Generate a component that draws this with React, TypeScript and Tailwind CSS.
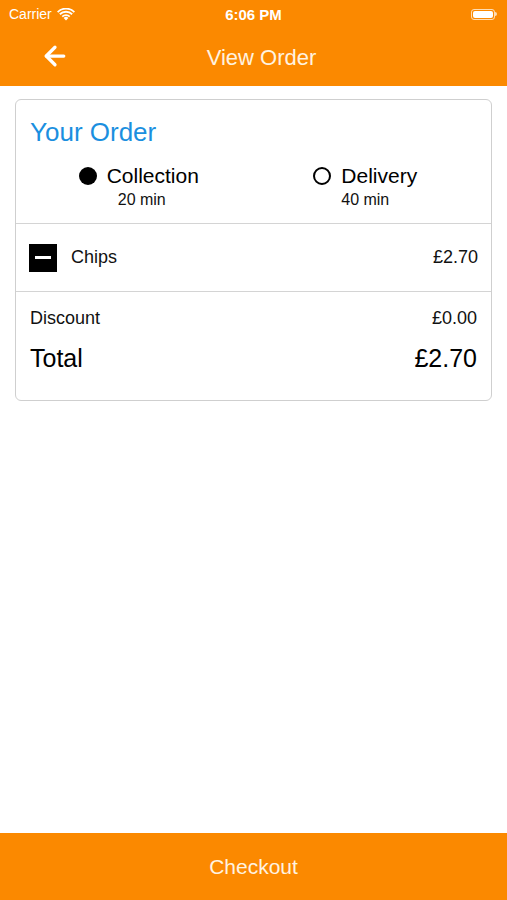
import { ArrowLeft } from "lucide-react";

const font = { fontFamily: "'Liberation Sans', Arial, sans-serif" };

function StatusBar() {
  return (
    <div className="h-[28px] flex items-center justify-between px-[9px] text-white">
      <div className="flex items-center gap-[5px] w-[120px]">
        <span className="text-[14px] leading-none">Carrier</span>
        <svg width="18" height="13" viewBox="0 0 18 13" fill="white">
          <path d="M9 12.5 L6.6 10 A3.4 3.4 0 0 1 11.4 10 Z" />
          <path d="M4.6 8 A6.2 6.2 0 0 1 13.4 8 L12.1 9.3 A4.4 4.4 0 0 0 5.9 9.3 Z" />
          <path d="M2.2 5.6 A9.6 9.6 0 0 1 15.8 5.6 L14.5 6.9 A7.8 7.8 0 0 0 3.5 6.9 Z" />
          <path d="M0 3.4 A12.8 12.8 0 0 1 18 3.4 L16.7 4.7 A11 11 0 0 0 1.3 4.7 Z" />
        </svg>
      </div>
      <span className="text-[15px] font-semibold leading-none">6:06 PM</span>
      <div className="w-[120px] flex justify-end pr-[1px]">
        <div className="flex items-center">
          <div className="w-[24px] h-[11px] rounded-[3px] border border-white/70 p-[1px]">
            <div className="w-full h-full rounded-[2px] bg-white" />
          </div>
          <div className="w-[1.5px] h-[4px] bg-white/70 rounded-r" />
        </div>
      </div>
    </div>
  );
}

export default function App() {
  return (
    <div className="w-[507px] h-[900px] flex flex-col bg-white" style={font}>
      <div className="bg-[#fb8900] h-[86px] flex flex-col">
        <StatusBar />
        <div className="relative flex-1 flex items-center justify-center">
          <ArrowLeft className="absolute left-[40px] top-[13px] text-white" size={30} strokeWidth={2.6} />
          <span className="text-[22px] text-[#fff3e0] pl-[16px]">View Order</span>
        </div>
      </div>

      <div className="flex-1 px-[15px] pt-[13px]">
        <div className="border border-[#cfcfcf] rounded-[6px]">
          <div className="pt-[15px] pb-[12px]">
            <h1 className="px-[14px] text-[26px] leading-[34px] text-[#1b8fdf]">Your Order</h1>
            <div className="grid grid-cols-2 px-[14px] mt-[14px]">
              <div className="flex flex-col items-center">
                <div className="flex items-center gap-[10px] pr-[6px]">
                  <span className="w-[18px] h-[18px] rounded-full bg-black" />
                  <span className="text-[21px] leading-[26px] text-black">Collection</span>
                </div>
                <span className="text-[16px] leading-[22px] text-[#111]">20 min</span>
              </div>
              <div className="flex flex-col items-center">
                <div className="flex items-center gap-[10px]">
                  <span className="w-[18px] h-[18px] rounded-full border-2 border-black" />
                  <span className="text-[21px] leading-[26px] text-black">Delivery</span>
                </div>
                <span className="text-[16px] leading-[22px] text-[#111]">40 min</span>
              </div>
            </div>
          </div>

          <div className="border-t border-[#d4d4d4] h-[68px] flex items-center justify-between px-[13px]">
            <div className="flex items-center gap-[14px]">
              <div className="w-[28px] h-[28px] bg-black flex items-center justify-center">
                <div className="w-[16px] h-[3px] bg-white" />
              </div>
              <span className="text-[18px] text-[#111]">Chips</span>
            </div>
            <span className="text-[18px] text-[#111]">£2.70</span>
          </div>

          <div className="border-t border-[#d4d4d4] px-[14px] pt-[14px] pb-[27px]">
            <div className="flex justify-between text-[18px] leading-[24px] text-[#111]">
              <span>Discount</span>
              <span>£0.00</span>
            </div>
            <div className="flex justify-between text-[25px] leading-[30px] text-black mt-[13px]">
              <span>Total</span>
              <span>£2.70</span>
            </div>
          </div>
        </div>
      </div>

      <div className="h-[67px] bg-[#fb8900] flex items-center justify-center">
        <span className="text-[21px] text-[#fff3e0]">Checkout</span>
      </div>
    </div>
  );
}
